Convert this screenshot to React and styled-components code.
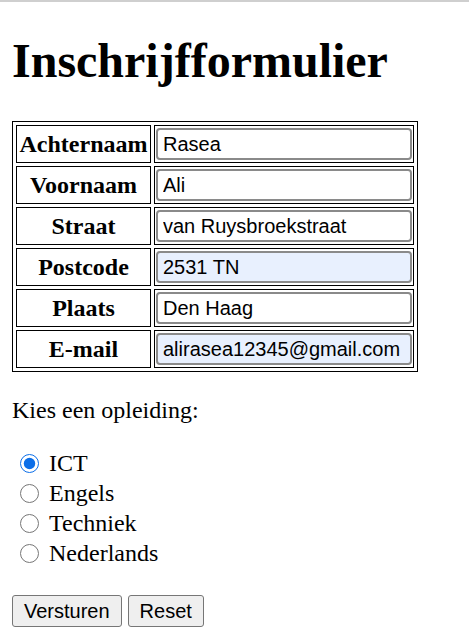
import React, { useState } from 'react';
import styled, { createGlobalStyle } from 'styled-components';

const GlobalStyle = createGlobalStyle`
  html, body { background: #fff; }
  body {
    margin: 0 12px 12px;
    font-family: "Liberation Serif", "Times New Roman", serif;
    font-size: 24px;
    color: #000;
  }
`;

// grey strip of the browser frame above the page
const TopEdge = styled.div`
  position: fixed;
  top: 0;
  left: 0;
  right: 0;
  height: 2px;
  background: #cfcfcf;
`;

const Title = styled.h1`
  font-size: 48px;
  font-weight: bold;
  margin: 0;
  padding: 33px 0;
  line-height: 55px;
`;

const FormTable = styled.table`
  border: 1px solid #000;
  border-spacing: 3px;
`;

const Label = styled.th`
  border: 1px solid #000;
  padding: 1px 2px;
  font-size: 24px;
  font-weight: bold;
  text-align: center;
  width: 129px;
`;

const Field = styled.td`
  border: 1px solid #000;
  padding: 2px 1px;
`;

const TextInput = styled.input`
  box-sizing: border-box;
  width: 256px;
  height: 32px;
  margin: 0;
  padding: 0 5px;
  font-family: "Liberation Sans", Arial, sans-serif;
  font-size: 20px;
  color: #000;
  border: 2px solid #8a8a8a;
  border-radius: 4px;
  background: ${(p) => (p.$filled ? '#e8f0fe' : '#fff')};
  display: block;
`;

const Intro = styled.p`
  margin: 24px 0;
  line-height: 28px;
`;

const Choices = styled.div`
  display: flex;
  flex-direction: column;
  margin: 24px 0 27px;
`;

const Choice = styled.label`
  display: flex;
  align-items: center;
  height: 30px;
  line-height: 30px;
`;

const Radio = styled.input`
  width: 19px;
  height: 19px;
  margin: 0 10px 0 8px;
  accent-color: #0b6ee8;
`;

const Buttons = styled.div`
  display: flex;
  gap: 6px;
`;

const Button = styled.button`
  font-family: "Liberation Sans", Arial, sans-serif;
  font-size: 20px;
  height: 32px;
  padding: 0 11px;
  color: #000;
  background: #efefef;
  border: 1px solid #767676;
  border-radius: 3px;
`;

const fields = [
  { label: 'Achternaam', value: 'Rasea' },
  { label: 'Voornaam', value: 'Ali' },
  { label: 'Straat', value: 'van Ruysbroekstraat' },
  { label: 'Postcode', value: '2531 TN', filled: true },
  { label: 'Plaats', value: 'Den Haag' },
  { label: 'E-mail', value: 'alirasea12345@gmail.com', filled: true },
];

const studies = ['ICT', 'Engels', 'Techniek', 'Nederlands'];

export default function App() {
  const [study, setStudy] = useState('ICT');

  return (
    <>
      <GlobalStyle />
      <TopEdge />
      <Title>Inschrijfformulier</Title>
      <form onSubmit={(e) => e.preventDefault()}>
        <FormTable>
          <tbody>
            {fields.map((f) => (
              <tr key={f.label}>
                <Label>{f.label}</Label>
                <Field>
                  <TextInput defaultValue={f.value} $filled={f.filled} />
                </Field>
              </tr>
            ))}
          </tbody>
        </FormTable>
        <Intro>Kies een opleiding:</Intro>
        <Choices>
          {studies.map((s) => (
            <Choice key={s}>
              <Radio
                type="radio"
                name="opleiding"
                checked={study === s}
                onChange={() => setStudy(s)}
              />
              {s}
            </Choice>
          ))}
        </Choices>
        <Buttons>
          <Button type="submit">Versturen</Button>
          <Button type="reset">Reset</Button>
        </Buttons>
      </form>
    </>
  );
}
